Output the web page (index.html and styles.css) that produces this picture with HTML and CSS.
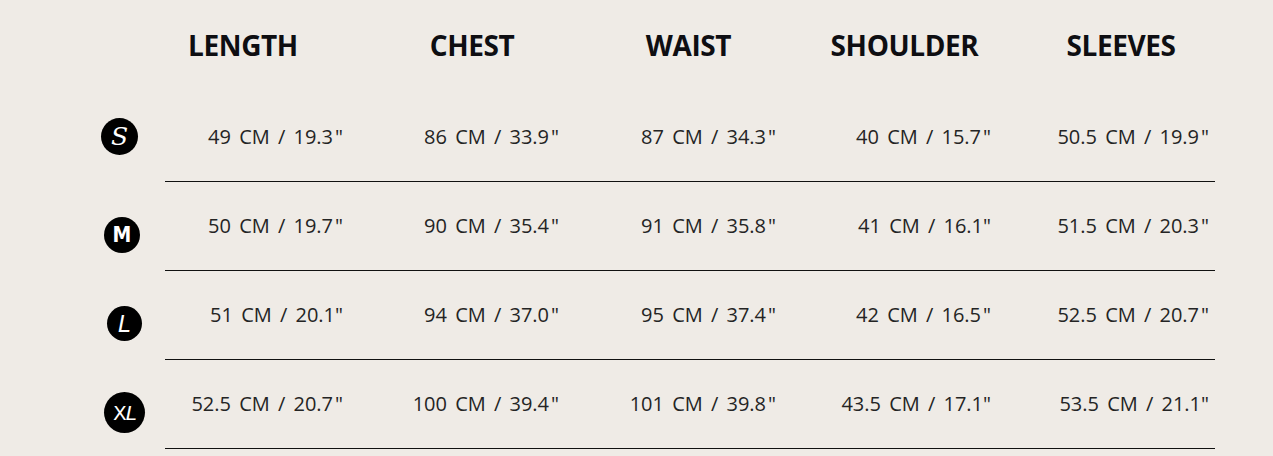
FILE: index.html
```html
<!DOCTYPE html>
<html lang="en">
<head>
<meta charset="utf-8">
<title>Size chart</title>
<link rel="stylesheet" href="styles.css">
</head>
<body>
<div class="chart">
  <div class="corner"></div>
  <div class="head head--first">LENGTH</div>
  <div class="head">CHEST</div>
  <div class="head">WAIST</div>
  <div class="head">SHOULDER</div>
  <div class="head">SLEEVES</div>

  <div class="size"><span class="badge badge--s">S</span></div>
  <div class="cell">49 CM / 19.3&#8202;"</div>
  <div class="cell">86 CM / 33.9&#8202;"</div>
  <div class="cell">87 CM / 34.3&#8202;"</div>
  <div class="cell">40 CM / 15.7&#8202;"</div>
  <div class="cell">50.5 CM / 19.9&#8202;"</div>

  <div class="size"><span class="badge badge--m">M</span></div>
  <div class="cell">50 CM / 19.7&#8202;"</div>
  <div class="cell">90 CM / 35.4&#8202;"</div>
  <div class="cell">91 CM / 35.8&#8202;"</div>
  <div class="cell">41 CM / 16.1"</div>
  <div class="cell">51.5 CM / 20.3&#8202;"</div>

  <div class="size"><span class="badge badge--l">L</span></div>
  <div class="cell">51 CM / 20.1"</div>
  <div class="cell">94 CM / 37.0&#8202;"</div>
  <div class="cell">95 CM / 37.4&#8202;"</div>
  <div class="cell">42 CM / 16.5&#8202;"</div>
  <div class="cell">52.5 CM / 20.7&#8202;"</div>

  <div class="size"><span class="badge badge--xl">X<i>L</i></span></div>
  <div class="cell">52.5 CM / 20.7&#8202;"</div>
  <div class="cell">100 CM / 39.4&#8202;"</div>
  <div class="cell">101 CM / 39.8&#8202;"</div>
  <div class="cell">43.5 CM / 17.1"</div>
  <div class="cell">53.5 CM / 21.1"</div>
</div>
</body>
</html>
```

FILE: styles.css
```css
html, body {
  margin: 0;
  padding: 0;
}
body {
  background: #efebe6;
  color: #1b1b1b;
  font-family: "Open Sans", "Noto Sans", sans-serif;
  width: 1273px;
  height: 456px;
  overflow: hidden;
}
.chart {
  display: grid;
  grid-template-columns: 165px 184px 216px 217px 215px 218px;
  grid-template-rows: 93px repeat(4, 89px);
}
.head {
  display: flex;
  align-items: center;
  justify-content: center;
  padding-left: 30px;
  padding-bottom: 4px;
  font-weight: 700;
  font-size: 28px;
  color: #0e0e12;
  letter-spacing: -0.4px;
}
.head--first {
  padding-left: 0;
  padding-right: 28px;
}
.size {
  display: flex;
  align-items: center;
  padding-left: 101px;
}
.cell {
  display: flex;
  align-items: center;
  justify-content: flex-end;
  padding-right: 6px;
  padding-bottom: 1px;
  border-bottom: 1px solid #111;
  font-size: 20px;
  word-spacing: 3px;
  white-space: pre;
  color: #242424;
}
.badge {
  display: flex;
  align-items: center;
  justify-content: center;
  width: 37px;
  height: 37px;
  border-radius: 50%;
  background: #000;
  color: #fff;
  font-family: "DejaVu Sans", sans-serif;
  font-weight: 700;
}
.badge--s {
  font-family: "DejaVu Serif", serif;
  font-style: italic;
  font-weight: 400;
  font-size: 25px;
  margin-bottom: 2px;
}
.badge--m {
  font-size: 21px;
  font-stretch: condensed;
  font-family: "DejaVu Sans Condensed", "DejaVu Sans", sans-serif;
  margin-top: 16px;
  margin-left: 3px;
  width: 36px;
  height: 36px;
}
.badge--l {
  font-style: italic;
  font-weight: 400;
  font-size: 23px;
  margin-top: 16px;
  margin-left: 6px;
  width: 35px;
  height: 35px;
}
.badge--xl {
  font-size: 20px;
  font-weight: 400;
  margin-top: 16px;
  margin-left: 3px;
  width: 41px;
  height: 41px;
  letter-spacing: -1px;
}
.badge--xl i {
  font-weight: 400;
}
```
